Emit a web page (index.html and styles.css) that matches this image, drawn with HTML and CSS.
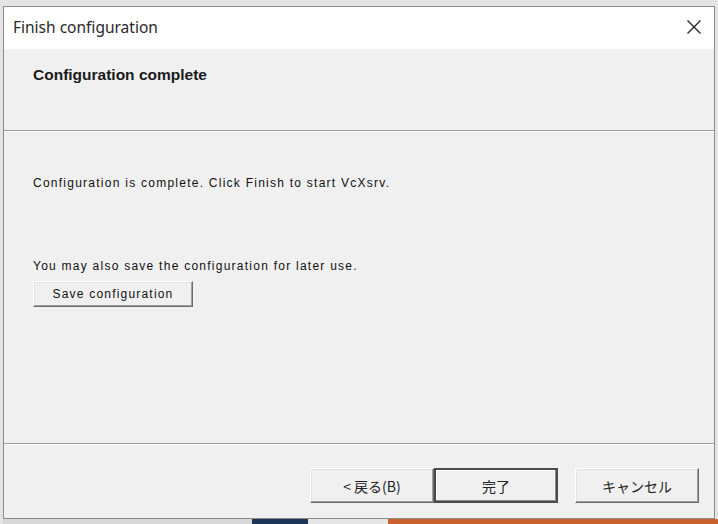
FILE: index.html
```html
<!DOCTYPE html>
<html lang="ja">
<head>
  <meta charset="UTF-8">
  <title>Finish configuration</title>
  <link rel="stylesheet" href="styles.css">
</head>
<body>

<div class="desk">
  <div class="win">
    <div class="titlebar">
      <span class="title">Finish configuration</span>
      <svg class="close" width="16" height="16" viewBox="0 0 16 16">
        <path d="M1.5 1.5 L14.5 14.5 M14.5 1.5 L1.5 14.5" stroke="#222" stroke-width="1.3" fill="none"/>
      </svg>
    </div>

    <div class="header">
      <h1>Configuration complete</h1>
    </div>
    <div class="sep"></div>

    <div class="content">
      <p class="msg">Configuration is complete. Click Finish to start VcXsrv.</p>
      <p class="msg note">You may also save the configuration for later use.</p>
      <button class="btn save">Save configuration</button>
    </div>

    <div class="sep"></div>
    <div class="footer">
      <button class="btn wide">&lt; 戻る(B)</button>
      <button class="btn wide default">完了</button>
      <button class="btn wide cancel">キャンセル</button>
    </div>
  </div>

  <div class="strip">
    <span class="blk grey"></span>
    <span class="blk navy"></span>
    <span class="blk light"></span>
    <span class="blk orange"></span>
  </div>
</div>

</body>
</html>
```

FILE: styles.css
```css
body {
  margin: 0;
  background: #dcdcdc;
  font-family: "Liberation Sans", Arial, sans-serif;
  overflow: hidden;
}
.desk {
  width: 718px;
  height: 524px;
  padding: 6px 0 0 3px;
  box-sizing: border-box;
  background: #e4e4e4;
}
.win {
  width: 712px;
  height: 513px;
  box-sizing: border-box;
  border: 1px solid #8c8c8c;
  background: #f0f0f0;
  display: flex;
  flex-direction: column;
}
.titlebar {
  height: 42px;
  background: #fff;
  display: flex;
  align-items: center;
  justify-content: space-between;
  padding: 0 12px 0 9px;
  flex-shrink: 0;
}
.title {
  font-family: "Noto Sans", sans-serif;
  font-size: 15.5px;
  color: #2a2a2a;
  margin-top: -2px;
}
.close {
  margin-top: -2px;
}
.header {
  height: 81px;
  box-sizing: border-box;
  padding: 17px 0 0 29px;
  flex-shrink: 0;
}
.header h1 {
  margin: 0;
  font-size: 15.5px;
  font-weight: bold;
  color: #1a1a1a;
  line-height: 18px;
}
.sep {
  height: 1px;
  background: #a0a0a0;
  border-bottom: 1px solid #fff;
  flex-shrink: 0;
}
.content {
  flex: 1;
  padding: 44px 0 0 29px;
}
.msg {
  margin: 0;
  font-size: 12px;
  line-height: 14px;
  letter-spacing: 1.25px;
  color: #111;
}
.note {
  margin-top: 69px;
}
.btn {
  font-family: "Liberation Sans", "Noto Sans CJK JP", sans-serif;
  background: #f0f0f0;
  color: #111;
  border: 1px solid;
  border-color: #fff #6a6a6a #6a6a6a #fff;
  box-shadow: inset -1px -1px 0 #a0a0a0, inset 1px 1px 0 #e3e3e3;
  padding: 0;
  cursor: pointer;
}
.save {
  margin-top: 8px;
  width: 160px;
  height: 26px;
  font-size: 12px;
  letter-spacing: 1.2px;
}
.footer {
  height: 73px;
  box-sizing: border-box;
  padding: 23px 15px 0 0;
  display: flex;
  justify-content: flex-end;
  align-items: flex-start;
  flex-shrink: 0;
}
.wide {
  width: 124px;
  height: 35px;
  font-family: "Noto Sans CJK JP", sans-serif;
  font-size: 14px;
  color: #222;
}
.default {
  border: 2px solid #4a4a4a;
  box-shadow: inset -1px -1px 0 #8a8a8a, inset 1px 1px 0 #fff;
}
.cancel {
  margin-left: 17px;
}
.strip {
  display: flex;
  height: 5px;
}
.blk {
  display: block;
  height: 100%;
}
.grey { width: 249px; background: #d8d8d8; }
.navy { width: 56px; background: #1d3557; }
.light { width: 80px; background: #e6e6e6; }
.orange { flex: 1; background: #c9612e; }
```
